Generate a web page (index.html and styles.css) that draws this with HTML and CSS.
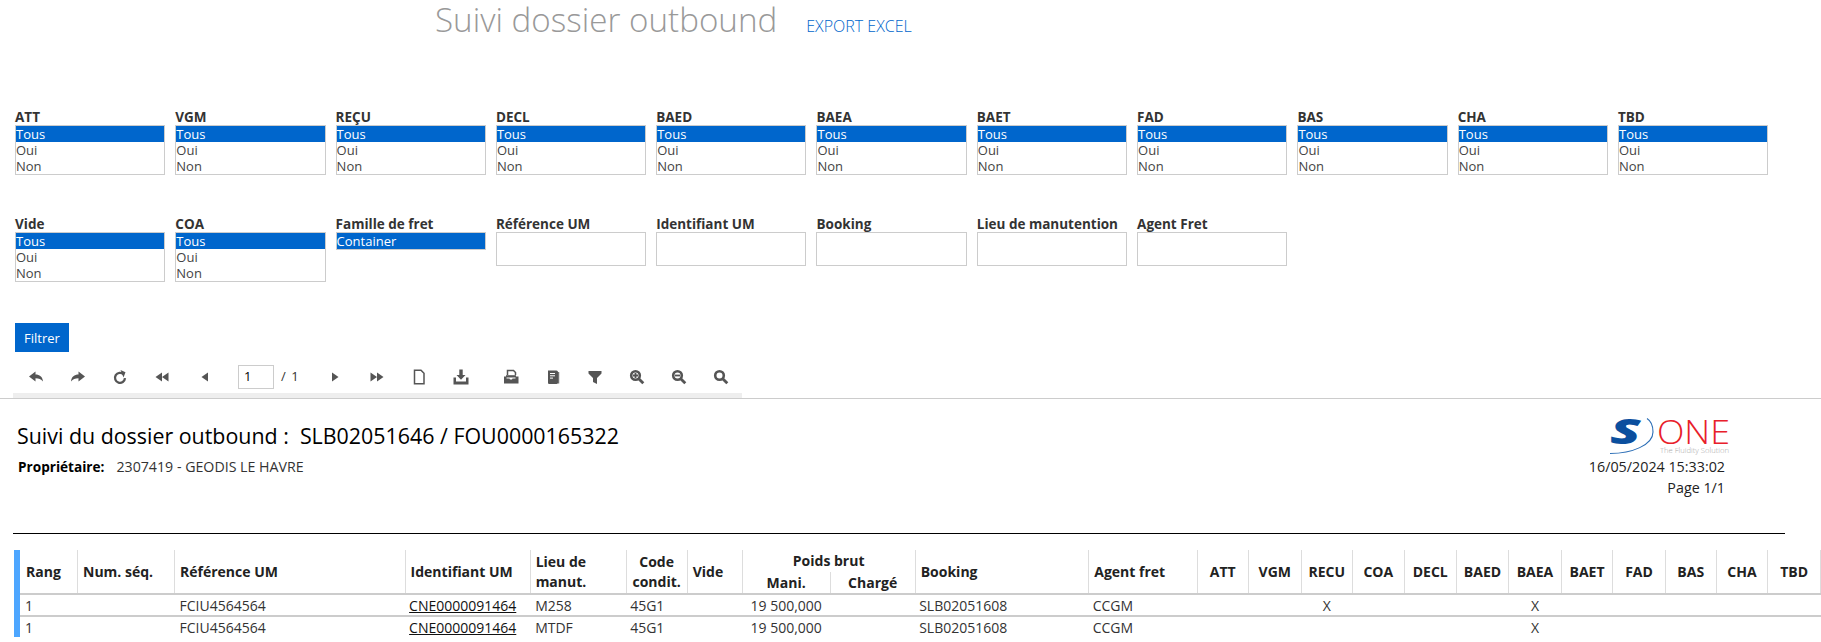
FILE: index.html
```html
<!DOCTYPE html>
<html lang="fr">
<head>
<meta charset="utf-8">
<title>Suivi dossier outbound</title>
<link rel="stylesheet" href="styles.css">
</head>
<body>
<header class="page-head">
  <h1 class="page-title">Suivi dossier outbound</h1>
  <a class="export-link" href="#">EXPORT EXCEL</a>
</header>

<section class="filters">
  <div class="filter-row">
    <div class="field"><label>ATT</label><div class="listbox"><div class="opt sel">Tous</div><div class="opt">Oui</div><div class="opt">Non</div></div></div>
    <div class="field"><label>VGM</label><div class="listbox"><div class="opt sel">Tous</div><div class="opt">Oui</div><div class="opt">Non</div></div></div>
    <div class="field"><label>REÇU</label><div class="listbox"><div class="opt sel">Tous</div><div class="opt">Oui</div><div class="opt">Non</div></div></div>
    <div class="field"><label>DECL</label><div class="listbox"><div class="opt sel">Tous</div><div class="opt">Oui</div><div class="opt">Non</div></div></div>
    <div class="field"><label>BAED</label><div class="listbox"><div class="opt sel">Tous</div><div class="opt">Oui</div><div class="opt">Non</div></div></div>
    <div class="field"><label>BAEA</label><div class="listbox"><div class="opt sel">Tous</div><div class="opt">Oui</div><div class="opt">Non</div></div></div>
    <div class="field"><label>BAET</label><div class="listbox"><div class="opt sel">Tous</div><div class="opt">Oui</div><div class="opt">Non</div></div></div>
    <div class="field"><label>FAD</label><div class="listbox"><div class="opt sel">Tous</div><div class="opt">Oui</div><div class="opt">Non</div></div></div>
    <div class="field"><label>BAS</label><div class="listbox"><div class="opt sel">Tous</div><div class="opt">Oui</div><div class="opt">Non</div></div></div>
    <div class="field"><label>CHA</label><div class="listbox"><div class="opt sel">Tous</div><div class="opt">Oui</div><div class="opt">Non</div></div></div>
    <div class="field"><label>TBD</label><div class="listbox"><div class="opt sel">Tous</div><div class="opt">Oui</div><div class="opt">Non</div></div></div>
  </div>
  <div class="filter-row">
    <div class="field"><label>Vide</label><div class="listbox"><div class="opt sel">Tous</div><div class="opt">Oui</div><div class="opt">Non</div></div></div>
    <div class="field"><label>COA</label><div class="listbox"><div class="opt sel">Tous</div><div class="opt">Oui</div><div class="opt">Non</div></div></div>
    <div class="field"><label>Famille de fret</label><div class="listbox"><div class="opt sel">Container</div></div></div>
    <div class="field"><label>Référence UM</label><input class="text-input" type="text"></div>
    <div class="field"><label>Identifiant UM</label><input class="text-input" type="text"></div>
    <div class="field"><label>Booking</label><input class="text-input" type="text"></div>
    <div class="field"><label>Lieu de manutention</label><input class="text-input" type="text"></div>
    <div class="field"><label>Agent Fret</label><input class="text-input" type="text"></div>
  </div>
  <button class="filter-btn" type="button">Filtrer</button>
</section>

<div class="toolbar-wrap">
  <nav class="toolbar">
    <span class="tool"><svg viewBox="0 0 16 16"><path d="M1 7.5 7.5 2.5V5.5C11.5 5.5 14.5 7.5 15 12.5 13 10 11 9.3 7.5 9.3V12.5Z"/></svg></span>
    <span class="tool"><svg viewBox="0 0 16 16"><path d="M15 7.5 8.5 2.5V5.5C4.5 5.5 1.5 7.5 1 12.5 3 10 5 9.3 8.5 9.3V12.5Z"/></svg></span>
    <span class="tool"><svg viewBox="0 0 16 16"><path class="line" d="M11.5 5.2A5 5 0 1 0 13 9.2" stroke-width="2.3"/><path d="M8.5 1 13.5 3.2 11.5 8.5Z"/></svg></span>
    <span class="tool"><svg viewBox="0 0 16 16"><path d="M1.5 8 8 3.5V12.5ZM8 8 14.5 3.5V12.5Z"/></svg></span>
    <span class="tool tool-wide"><svg viewBox="0 0 16 16"><path d="M4.5 8 11 3.5V12.5Z"/></svg></span>
    <span class="pager"><input class="page-input" type="text" value="1"><span class="page-total"><i>/</i> 1</span></span>
    <span class="tool"><svg viewBox="0 0 16 16"><path d="M11.5 8 5 3.5V12.5Z"/></svg></span>
    <span class="tool"><svg viewBox="0 0 16 16"><path d="M8 8 1.5 3.5V12.5ZM14.5 8 8 3.5V12.5Z"/></svg></span>
    <span class="tool"><svg viewBox="0 0 16 16"><path class="line" d="M3.5 1.2H10L13 4.2V14.8H3.5Z" stroke-width="1.5"/></svg></span>
    <span class="tool tool-gap"><svg viewBox="0 0 16 16"><path d="M6.3.5H9.7V6H12.5L8 10.8 3.5 6H6.3Z"/><path d="M.5 8.5H3V12.5H13V8.5H15.5V15.5H.5Z"/></svg></span>
    <span class="tool"><svg viewBox="0 0 16 16"><path class="line" d="M4.5 6V1.5H10.5L12.5 3.5V6" stroke-width="1.5"/><path d="M1 7.5H3.5V9.5H6.5L7 10.5H9L9.5 9.5H12.5V7.5H15.5V14.5H1Z"/><path d="M3 6.2H13V8.5H3Z"/></svg></span>
    <span class="tool"><svg viewBox="0 0 16 16"><path d="M3 1.5H11.5Q13 1.5 13 3V13.5Q13 15 11.5 15H4Q3 15 3 13.5Z"/><path class="gap" d="M5 4.5H10M5 6.8H10M5 9.1H8"/><path class="line" d="M13.7 3V14.5" stroke-width="1"/></svg></span>
    <span class="tool"><svg viewBox="0 0 16 16"><path d="M1.5 2H14.5V4.5L10 9V15L6 13V9L1.5 4.5Z"/></svg></span>
    <span class="tool"><svg viewBox="0 0 16 16"><circle class="line" cx="6.5" cy="6.5" r="4.3" stroke-width="2.6"/><path class="line" d="M9.7 9.7 14.3 14.3" stroke-width="2.8"/><path class="line" d="M4 6.5H9M6.5 4V9" stroke-width="1.8"/></svg></span>
    <span class="tool"><svg viewBox="0 0 16 16"><circle class="line" cx="6.5" cy="6.5" r="4.3" stroke-width="2.6"/><path class="line" d="M9.7 9.7 14.3 14.3" stroke-width="2.8"/><path class="line" d="M4 6.5H9" stroke-width="1.8"/></svg></span>
    <span class="tool"><svg viewBox="0 0 16 16"><circle class="line" cx="6.5" cy="6.5" r="4.3" stroke-width="2.6"/><path class="line" d="M9.7 9.7 14.3 14.3" stroke-width="2.8"/></svg></span>
  </nav>
</div>

<section class="report">
  <div class="report-head">
    <div class="report-info">
      <h2 class="report-title">Suivi du dossier outbound :&nbsp; SLB02051646 / FOU0000165322</h2>
      <p class="owner"><b>Propriétaire:</b><span>2307419 - GEODIS LE HAVRE</span></p>
    </div>
    <div class="report-meta">
      <svg class="logo" viewBox="0 0 120 36" role="img" aria-label="S-One">
        <text class="logo-s" transform="translate(0 25.5) scale(1.55 1)">S</text>
        <path class="logo-arc" d="M0 35.5C22 35.5 43 27 43 14 43 8 41 3 37 .5" />
        <text class="logo-one" x="47" y="25.5" textLength="73" lengthAdjust="spacingAndGlyphs">ONE</text>
        <text class="logo-tag" x="50" y="34.5" textLength="69" lengthAdjust="spacingAndGlyphs">The Fluidity Solution</text>
      </svg>
      <div class="stamp">16/05/2024 15:33:02</div>
      <div class="stamp">Page 1/1</div>
    </div>
  </div>
  <hr class="rule">
  <div class="table-wrap">
    <table class="grid">
      <colgroup>
        <col class="c-rang"><col class="c-seq"><col class="c-ref"><col class="c-id"><col class="c-lieu"><col class="c-code"><col class="c-vide"><col class="c-mani"><col class="c-charge"><col class="c-book"><col class="c-agent">
        <col class="c-att"><col class="c-vgm"><col class="c-recu"><col class="c-coa"><col class="c-decl"><col class="c-baed"><col class="c-baea"><col class="c-baet"><col class="c-fad"><col class="c-bas"><col class="c-cha"><col class="c-tbd">
      </colgroup>
      <thead>
        <tr>
          <th rowspan="2" class="first">Rang</th><th rowspan="2">Num. séq.</th><th rowspan="2">Référence UM</th><th rowspan="2">Identifiant UM</th><th rowspan="2">Lieu de<br>manut.</th><th rowspan="2" class="mid">Code<br>condit.</th><th rowspan="2">Vide</th>
          <th colspan="2" class="mid top">Poids brut</th>
          <th rowspan="2">Booking</th><th rowspan="2">Agent fret</th>
          <th rowspan="2" class="mid">ATT</th><th rowspan="2" class="mid">VGM</th><th rowspan="2" class="mid">RECU</th><th rowspan="2" class="mid">COA</th><th rowspan="2" class="mid">DECL</th><th rowspan="2" class="mid">BAED</th><th rowspan="2" class="mid">BAEA</th><th rowspan="2" class="mid">BAET</th><th rowspan="2" class="mid">FAD</th><th rowspan="2" class="mid">BAS</th><th rowspan="2" class="mid">CHA</th><th rowspan="2" class="mid">TBD</th>
        </tr>
        <tr><th class="mid sub">Mani.</th><th class="mid sub">Chargé</th></tr>
      </thead>
      <tbody>
        <tr>
          <td class="wide-pad">1</td><td></td><td class="wide-pad">FCIU4564564</td><td><a class="um-link" href="#">CNE0000091464</a></td><td class="wide-pad">M258</td><td>45G1</td><td></td><td class="mid">19 500,000</td><td></td><td>SLB02051608</td><td>CCGM</td>
          <td></td><td></td><td class="mid">X</td><td></td><td></td><td></td><td class="mid">X</td><td></td><td></td><td></td><td></td><td></td>
        </tr>
        <tr>
          <td class="wide-pad">1</td><td></td><td class="wide-pad">FCIU4564564</td><td><a class="um-link" href="#">CNE0000091464</a></td><td class="wide-pad">MTDF</td><td>45G1</td><td></td><td class="mid">19 500,000</td><td></td><td>SLB02051608</td><td>CCGM</td>
          <td></td><td></td><td></td><td></td><td></td><td></td><td class="mid">X</td><td></td><td></td><td></td><td></td><td></td>
        </tr>
      </tbody>
    </table>
  </div>
</section>
</body>
</html>
```

FILE: styles.css
```css
* { box-sizing: border-box; }
html, body { height: 642px; overflow: hidden; }
body {
  margin: 0;
  background: #fff;
  color: #333;
  font-family: "Open Sans", "Liberation Sans", sans-serif;
  font-size: 13px;
}

.page-head {
  display: flex;
  align-items: baseline;
  height: 42px;
  padding-left: 435px;
}
.page-title {
  margin: -1px 0 0;
  font-size: 33.2px;
  line-height: 42px;
  font-weight: 300;
  color: #999;
}
.export-link {
  margin-left: 29px;
  font-size: 16px;
  font-weight: 300;
  color: #0066cc;
  text-decoration: none;
}

.filters { padding: 67px 0 0 15px; }
.filter-row {
  display: flex;
  gap: 10px;
  height: 107px;
}
.field {
  display: flex;
  flex-direction: column;
  width: 150.3px;
}
.field label {
  height: 16px;
  font-size: 13.5px;
  line-height: 16px;
  font-weight: 700;
  color: #333;
  white-space: nowrap;
}
.listbox {
  border: 1px solid #ccc;
  background: #fff;
}
.opt {
  height: 16px;
  font-size: 13px;
  line-height: 16px;
  color: #444;
}
.opt.sel { background: #0066cc; color: #fff; }
.text-input {
  height: 34px;
  border: 1px solid #ccc;
  background: #fff;
}
.filter-btn {
  display: block;
  width: 54px;
  height: 29px;
  border: 0;
  padding: 0;
  background: #0066cc;
  color: #fff;
  font: 13px "Open Sans", sans-serif;
}

.toolbar-wrap {
  height: 47px;
  border-bottom: 1px solid #ccc;
}
.toolbar {
  display: flex;
  align-items: center;
  width: 729px;
  height: 46px;
  margin-left: 13px;
  padding: 9px 0 5px 2px;
  background: linear-gradient(#fff 0 41px, #eee 41px);
}
.tool {
  display: flex;
  justify-content: center;
  align-items: center;
  width: 42px;
  flex: none;
}
.tool-wide { width: 43px; }
.tool-gap { margin-right: 8px; }
.tool svg { width: 16px; height: 16px; fill: #555; }
.tool svg .line { fill: none; stroke: #555; }
.tool svg .gap { fill: none; stroke: #fff; stroke-width: 1; }
.pager {
  display: flex;
  align-items: center;
  width: 88px;
  padding-left: 12px;
}
.page-input {
  width: 36px;
  height: 24px;
  padding: 0 0 2px 5px;
  border: 1px solid #ccc;
  background: #fff;
  color: #000;
  font: 13px "Open Sans", sans-serif;
}
.page-total {
  margin-left: 7px;
  margin-top: -3px;
  font-size: 13px;
  color: #333;
}
.page-total i { font-style: normal; margin-right: 2px; }

.report-head {
  display: flex;
  justify-content: space-between;
  height: 134px;
}
.report-info { padding: 19px 0 0 17px; }
.report-title {
  margin: 0;
  font-size: 21.4px;
  line-height: 36px;
  font-weight: 400;
  color: #000;
}
.owner {
  display: flex;
  gap: 12px;
  margin: 3px 0 0 1px;
  font-size: 13.6px;
  line-height: 20px;
  color: #333;
}
.owner b { color: #000; }
.owner span { font-size: 14.2px; }
.report-meta {
  display: flex;
  flex-direction: column;
  align-items: flex-end;
  width: 211px;
  padding: 19px 96px 0 0;
  flex: none;
}
.logo { width: 120px; height: 36px; margin: 0 -5px 2px 0; flex: none; overflow: visible; }
.logo-s { font: italic 800 36px "Open Sans", sans-serif; fill: #0b4f9e; }
.logo-arc { fill: none; stroke: #2a6db5; stroke-width: 1.1; }
.logo-one { font: 300 33px "Open Sans", sans-serif; fill: #e8202a; }
.logo-tag { font: 300 8px "Open Sans", sans-serif; fill: #aaa; }
.stamp {
  font-size: 14.3px;
  line-height: 21px;
  color: #222;
  white-space: nowrap;
}

.rule {
  width: 1772px;
  height: 1px;
  margin: 0 0 16px 13px;
  border: 0;
  background: #000;
}
.table-wrap {
  height: 87px;
  margin-left: 14px;
  border-left: 6px solid #4da6ff;
  overflow: hidden;
}
.grid {
  width: 1801px;
  table-layout: fixed;
  border-collapse: collapse;
}
.c-rang { width: 57.5px; }
.c-seq { width: 97px; }
.c-ref { width: 230.5px; }
.c-id { width: 125px; }
.c-lieu { width: 96px; }
.c-code { width: 61px; }
.c-vide { width: 55px; }
.c-mani { width: 88px; }
.c-charge { width: 85px; }
.c-book { width: 173.5px; }
.c-agent { width: 108.5px; }
.c-att { width: 51px; }
.c-vgm { width: 53px; }
.c-recu { width: 51px; }
.c-coa, .c-decl { width: 52px; }
.c-baed, .c-baea { width: 52.5px; }
.c-baet { width: 51.5px; }
.c-fad { width: 52.5px; }
.c-bas { width: 51px; }
.c-cha { width: 51.5px; }
.c-tbd { width: 52.5px; }
.grid th {
  height: 22px;
  padding: 0 0 0 5px;
  border-right: 1px solid #ddd;
  font-size: 14px;
  line-height: 20px;
  font-weight: 700;
  text-align: left;
  color: #222;
  white-space: nowrap;
}
.grid th.first { padding-left: 6px; }
.grid thead { border-bottom: 2px solid #ccc; }
.grid th.mid { padding: 0; text-align: center; }
.grid td {
  height: 22px;
  padding: 1px 0 0 4px;
  font-size: 14px;
  line-height: 19px;
  color: #333;
  border-bottom: 2px solid #ccc;
  white-space: nowrap;
}
.grid td.wide-pad { padding-left: 5px; }
.grid td.mid { padding: 1px 0 0; text-align: center; }
.um-link { color: #111; text-decoration: underline; }
```
